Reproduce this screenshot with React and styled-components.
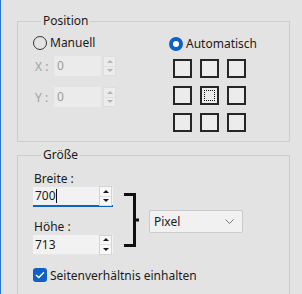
import React from "react";
import styled, { createGlobalStyle } from "styled-components";

const GlobalStyle = createGlobalStyle`
  html, body {
    margin: 0;
    padding: 0;
    background: #e3e3e3;
  }
  body {
    font-family: "Noto Sans", "Open Sans", sans-serif;
    font-size: 12px;
    color: #1b1b1b;
  }
`;

const Window = styled.div`
  width: 302px;
  height: 294px;
  box-sizing: border-box;
  border-left: 1px solid #2a74d6;
  padding: 13px 12px 0 16px;
  display: flex;
  flex-direction: column;
  gap: 5px;
  overflow: hidden;
`;

const Group = styled.fieldset`
  margin: 0;
  min-width: 0;
  border: 1px solid #cdcdcd;
  padding: ${(p) => p.$pad};
`;

const Legend = styled.legend`
  margin-left: 8px;
  padding: 0 2px;
  line-height: 16px;
  height: 16px;
`;

const PosGrid = styled.div`
  display: grid;
  grid-template-columns: 136px auto;
`;

const Column = styled.div`
  display: flex;
  flex-direction: column;
`;

const RadioRow = styled.label`
  display: flex;
  align-items: center;
  gap: 3px;
  height: 14px;
  line-height: 14px;
  margin-top: ${(p) => p.$top || 0}px;
`;

const RadioDot = styled.span`
  width: 14px;
  height: 14px;
  box-sizing: border-box;
  border-radius: 50%;
  border: ${(p) => (p.$on ? "4.5px solid #0f62c4" : "1px solid #333")};
  background: ${(p) => (p.$on ? "#fff" : "transparent")};
`;

const FieldRow = styled.div`
  display: flex;
  align-items: center;
  height: 20px;
  margin-top: ${(p) => p.$top}px;
`;

const AxisLabel = styled.span`
  width: 21px;
  padding-left: 2px;
  box-sizing: border-box;
  color: #a2a2a2;
`;

const DisabledField = styled.div`
  width: 47px;
  height: 20px;
  box-sizing: border-box;
  background: #ebebeb;
  color: #9c9c9c;
  padding-left: 3px;
  line-height: 20px;
`;

const SpinBox = styled.div`
  display: flex;
  flex-direction: column;
  width: 13px;
  height: 20px;
  margin-left: ${(p) => p.$gap || 0}px;
  box-sizing: border-box;
  border: 1px solid ${(p) => (p.$dim ? "#dedede" : "#d4d4d4")};
  background: ${(p) => (p.$dim ? "#ececec" : "#f8f8f8")};
`;

const SpinHalf = styled.div`
  flex: 1;
  display: flex;
  align-items: center;
  justify-content: center;
  & + & {
    border-top: 1px solid #e0e0e0;
  }
`;

const Tri = styled.span`
  width: 0;
  height: 0;
  border-left: 3px solid transparent;
  border-right: 3px solid transparent;
  ${(p) =>
    p.$down
      ? `border-top: 3px solid ${p.$dim ? "#b4b4b4" : "#1b1b1b"};`
      : `border-bottom: 3px solid ${p.$dim ? "#b4b4b4" : "#1b1b1b"};`}
`;

const AnchorGrid = styled.div`
  display: grid;
  grid-template-columns: repeat(3, 19px);
  grid-auto-rows: 19px;
  gap: 8px;
  margin: 8px 0 0 4px;
`;

const Anchor = styled.div`
  box-sizing: border-box;
  border: 2px solid #262626;
  background: #ececec;
  padding: 2px;
  &::after {
    content: "";
    display: ${(p) => (p.$focus ? "block" : "none")};
    width: 100%;
    height: 100%;
    box-sizing: border-box;
    border: 1px dotted #111;
  }
`;

const SizeRow = styled.div`
  display: flex;
  align-items: flex-start;
`;

const FieldLabel = styled.div`
  line-height: 16px;
  height: 16px;
  padding: 2px 0 0 1px;
  margin-top: ${(p) => p.$top || 0}px;
`;

const NumField = styled.div`
  display: flex;
  align-items: center;
  width: 80px;
  height: 20px;
  box-sizing: border-box;
  background: #f2f2f2;
  padding: 0 1px 0 2px;
  border-bottom: ${(p) => (p.$focus ? "2px solid #0f62c4" : "1px solid #e6e6e6")};
`;

const NumText = styled.span`
  flex: 1;
  display: flex;
  align-items: center;
  line-height: 18px;
`;

const Caret = styled.span`
  width: 1px;
  height: 14px;
  background: #111;
`;

const Bracket = styled.svg`
  display: block;
  margin: 24px 0 0 11px;
`;

const Select = styled.div`
  display: flex;
  align-items: center;
  justify-content: space-between;
  width: 94px;
  height: 23px;
  box-sizing: border-box;
  margin: 41px 0 0 10px;
  padding: 0 8px 0 4px;
  background: #f1f1f1;
  border: 1px solid #cbcbcb;
  border-radius: 2px;
`;

const CheckRow = styled.label`
  display: flex;
  align-items: center;
  gap: 3px;
  height: 14px;
  margin-top: 13px;
`;

const CheckBox = styled.span`
  width: 14px;
  height: 14px;
  border-radius: 3px;
  background: #0f62c4;
  display: flex;
  align-items: center;
  justify-content: center;
`;

function Spinner({ dim, gap }) {
  return (
    <SpinBox $dim={dim} $gap={gap}>
      <SpinHalf>
        <Tri $dim={dim} />
      </SpinHalf>
      <SpinHalf>
        <Tri $dim={dim} $down />
      </SpinHalf>
    </SpinBox>
  );
}

export default function App() {
  const anchors = [0, 1, 2, 3, 4, 5, 6, 7, 8];
  return (
    <>
      <GlobalStyle />
      <Window>
        <Group $pad="7px 0 9px 15px">
          <Legend>Position</Legend>
          <PosGrid>
            <Column>
              <RadioRow>
                <RadioDot />
                Manuell
              </RadioRow>
              <FieldRow $top={6}>
                <AxisLabel>X :</AxisLabel>
                <DisabledField>0</DisabledField>
                <Spinner dim gap={2} />
              </FieldRow>
              <FieldRow $top={11}>
                <AxisLabel>Y :</AxisLabel>
                <DisabledField>0</DisabledField>
                <Spinner dim gap={2} />
              </FieldRow>
            </Column>
            <Column>
              <RadioRow $top={1}>
                <RadioDot $on />
                Automatisch
              </RadioRow>
              <AnchorGrid>
                {anchors.map((i) => (
                  <Anchor key={i} $focus={i === 4} />
                ))}
              </AnchorGrid>
            </Column>
          </PosGrid>
        </Group>

        <Group $pad="6px 0 12px 15px">
          <Legend>Größe</Legend>
          <SizeRow>
            <Column>
              <FieldLabel>Breite :</FieldLabel>
              <NumField $focus>
                <NumText>
                  700
                  <Caret />
                </NumText>
                <Spinner />
              </NumField>
              <FieldLabel $top={10}>Höhe :</FieldLabel>
              <NumField>
                <NumText>713</NumText>
                <Spinner />
              </NumField>
            </Column>
            <Bracket width="15" height="54" viewBox="0 0 15 54">
              <path
                d="M0 1.5 H10.5 V52.5 H0 M10.5 27 H15"
                fill="none"
                stroke="#111"
                strokeWidth="3"
              />
            </Bracket>
            <Select>
              Pixel
              <svg width="9" height="6" viewBox="0 0 9 6">
                <path d="M0.5 0.5 L4.5 4.5 L8.5 0.5" fill="none" stroke="#777" strokeWidth="1" />
              </svg>
            </Select>
          </SizeRow>
          <CheckRow>
            <CheckBox>
              <svg width="10" height="8" viewBox="0 0 10 8">
                <path d="M1 4 L3.8 6.6 L9 1.2" fill="none" stroke="#fff" strokeWidth="1.4" />
              </svg>
            </CheckBox>
            Seitenverhältnis einhalten
          </CheckRow>
        </Group>
      </Window>
    </>
  );
}
